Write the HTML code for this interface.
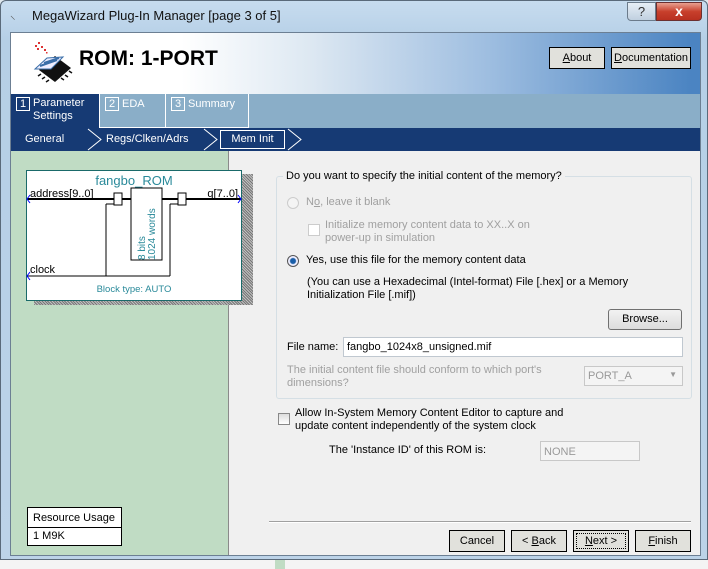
<!DOCTYPE html>
<html><head><meta charset="utf-8"><style>
*{box-sizing:border-box;margin:0;padding:0}
body{width:708px;height:569px;overflow:hidden;background:#dfe8ee;font-family:"Liberation Sans",sans-serif;font-size:11px;color:#000;position:relative}
.abs{position:absolute}
.frame{left:0;top:0;width:708px;height:560px;background:linear-gradient(#c7dcef,#b5cfe6 40px,#bcd3e8);border:1px solid #5a6a7a;border-radius:6px 6px 0 0}
.title{left:32px;top:8px;font-size:13px;font-family:"Liberation Sans",sans-serif;color:#111}
.client{left:10px;top:32px;width:691px;height:524px;background:#f0f0f0;border:1px solid #6c7f93;overflow:hidden}
.btn{position:absolute;background:#e1e1dc;border:1px solid #000;text-align:center;font-size:11px;line-height:20px}
.tnum{display:inline-block;border:1px solid #fff;width:14px;height:14px;line-height:12px;text-align:center;margin-right:3px;color:#fff}
.gray{color:#a0a0a0}
.nav{position:absolute;top:5px;color:#fff;font-size:11px}
</style></head><body>
<div class="abs frame"></div>
<div class="abs" style="left:0;top:560px;width:708px;height:9px;background:#f4f4f4"></div>
<div class="abs" style="left:275px;top:560px;width:10px;height:9px;background:#c0dcc4"></div>
<div class="abs" style="left:10px;top:8px;font-size:11px;color:#555">⸜</div>
<div class="abs title">MegaWizard Plug-In Manager [page 3 of 5]</div>
<div class="abs" style="left:627px;top:2px;width:29px;height:19px;border:1px solid #6b7b8b;border-radius:0 0 0 4px;background:linear-gradient(#e6eef6,#c0d0e0);text-align:center;font-size:13px;color:#333;line-height:17px">?</div>
<div class="abs" style="left:656px;top:2px;width:46px;height:19px;border:1px solid #6b3030;border-radius:0 0 4px 0;background:linear-gradient(#e8a090,#c8402c 50%,#b83020);text-align:center;font-size:14px;font-weight:bold;color:#fff;line-height:17px">x</div>

<div class="abs client">
 <div class="abs" style="left:0;top:0;width:691px;height:61px;background:linear-gradient(90deg,#fff 0,#fff 170px,#dde8f2 300px,#9dbde0 480px,#4b84c2 680px)"></div>
 <svg class="abs" style="left:14px;top:5px" width="50" height="45" viewBox="0 0 50 45">
  <g fill="#d33"><rect x="10" y="7" width="2" height="2"/><rect x="13" y="4" width="2" height="2"/><rect x="16" y="8" width="2" height="2"/><rect x="12" y="10" width="2" height="2"/><rect x="19" y="11" width="2" height="2"/><rect x="21" y="14" width="1.5" height="1.5"/></g>
  <polygon points="14,32 30,44 46,30 30,18" fill="#111"/>
  <g stroke="#111" stroke-width="1.5"><path d="M16,36 l-3,2 M20,39 l-3,2 M24,42 l-3,2 M44,33 l3,2 M40,37 l3,2 M36,40 l3,2"/></g>
  <polygon points="10,31 22,20 38,19 26,31" fill="#eef" stroke="#3a6ea8" stroke-width="1"/>
  <path d="M15,28 L32,22 M19,25 L34,20" stroke="#3a6ea8" stroke-width="2"/>
 </svg>
 <div class="abs" style="left:68px;top:14px;font-size:21px;font-weight:bold">ROM: 1-PORT</div>
 <div class="btn" style="left:538px;top:14px;width:56px;height:22px"><u>A</u>bout</div>
 <div class="btn" style="left:600px;top:14px;width:80px;height:22px"><u>D</u>ocumentation</div>
 <div class="abs" style="left:0;top:61px;width:691px;height:34px;background:#8aaec8"></div>
 <div class="abs" style="left:0;top:61px;width:88px;height:34px;background:#163a74;color:#fff;padding:3px 0 0 5px;line-height:13px"><span class="tnum" style="float:left">1</span>Parameter<br>Settings</div>
 <div class="abs" style="left:88px;top:61px;width:67px;height:34px;border:1px solid #fff;border-top:none;border-bottom:none;color:#fff;padding:3px 0 0 5px"><span class="tnum">2</span>EDA</div>
 <div class="abs" style="left:155px;top:61px;width:83px;height:34px;border-right:1px solid #fff;color:#fff;padding:3px 0 0 5px"><span class="tnum">3</span>Summary</div>
 <div class="abs" style="top:94px;height:1px;background:#fff;left:88px;width:150px"></div>
 <div class="abs" style="left:0;top:95px;width:691px;height:23px;background:#163a74">
  <span class="nav" style="left:14px">General</span>
  <svg class="abs" style="left:76px;top:0" width="16" height="23"><path d="M1,1 L14,11.5 L1,22" fill="none" stroke="#fff"/></svg>
  <span class="nav" style="left:95px">Regs/Clken/Adrs</span>
  <svg class="abs" style="left:192px;top:0" width="16" height="23"><path d="M1,1 L14,11.5 L1,22" fill="none" stroke="#fff"/></svg>
  <div class="abs" style="left:209px;top:2px;width:65px;height:19px;border:1px solid #fff;color:#fff;text-align:center;line-height:17px">Mem Init</div>
  <svg class="abs" style="left:276px;top:0" width="16" height="23"><path d="M1,1 L14,11.5 L1,22" fill="none" stroke="#fff"/></svg>
 </div>
 <div class="abs" style="left:0;top:118px;width:218px;height:406px;background:#c0dcc4;border-right:1px solid #8a8a8a"></div>
 <div class="abs" style="left:23px;top:141px;width:219px;height:131px;background:repeating-linear-gradient(45deg,#777 0 1px,#c0c0c0 1px 2px)"></div>
 <svg class="abs" style="left:15px;top:137px" width="219" height="132" viewBox="0 0 219 132">
  <rect x="0.5" y="0.5" width="215" height="130" fill="#fff" stroke="#1a6a6a"/>
  <text x="108" y="15" font-family="Liberation Sans" font-size="13" fill="#2a8a9a" text-anchor="middle">fangbo_ROM</text>
  <text x="4" y="27" font-family="Liberation Sans" font-size="11">address[9..0]</text>
  <text x="212" y="27" font-family="Liberation Sans" font-size="11" text-anchor="end">q[7..0]</text>
  <path d="M1,29 H88 M96,29 H105 M136,29 H152 M160,29 H215" stroke="#000" stroke-width="2"/>
  <rect x="88" y="23" width="8" height="12" fill="#fff" stroke="#000"/>
  <rect x="152" y="23" width="8" height="12" fill="#fff" stroke="#000"/>
  <rect x="105" y="18" width="31" height="72" fill="#fff" stroke="#000"/>
  <path d="M80,34 H88 M80,34 V106 M144,34 H152 M144,34 V106 M1,106 H144" stroke="#000" fill="none"/>
  <text transform="translate(119,90) rotate(-90)" font-family="Liberation Sans" font-size="10" fill="#2a8a9a">8 bits</text>
  <text transform="translate(129,90) rotate(-90)" font-family="Liberation Sans" font-size="10" fill="#2a8a9a">1024 words</text>
  <text x="4" y="103" font-family="Liberation Sans" font-size="11">clock</text>
  <text x="108" y="122" font-family="Liberation Sans" font-size="9.5" fill="#2a8a9a" text-anchor="middle">Block type: AUTO</text>
  <path d="M4,25 L1,29 L4,33 M212,25 L215,29 L212,33 M4,102 L1,106 L4,110" stroke="#00f" fill="none"/>
 </svg>
 <div class="abs" style="left:16px;top:474px;width:95px;height:39px;background:#fff;border:1px solid #000">
  <div style="height:20px;border-bottom:1px solid #000;padding:4px 0 0 5px">Resource Usage</div>
  <div style="padding:2px 0 0 5px">1 M9K</div>
 </div>
 <div class="abs" style="left:265px;top:143px;width:416px;height:223px;border:1px solid #d5dfe5;border-radius:3px"></div>
 <div class="abs" style="left:272px;top:137px;background:#f0f0f0;padding:0 3px">Do you want to specify the initial content of the memory?</div>
 <div class="abs" style="left:276px;top:164px;width:12px;height:12px;border-radius:50%;border:1px solid #ccc;background:#f4f4f4"></div>
 <div class="abs gray" style="left:295px;top:163px">N<u>o</u>, leave it blank</div>
 <div class="abs" style="left:297px;top:191px;width:12px;height:12px;border:1px solid #ccc;background:#fff"></div>
 <div class="abs gray" style="left:314px;top:186px;line-height:13px">Initialize memory content data to XX..X on<br>power-up in simulation</div>
 <div class="abs" style="left:276px;top:222px;width:12px;height:12px;border-radius:50%;border:1px solid #555;background:radial-gradient(#1a5ea8 0 2.5px,#eef 3.5px)"></div>
 <div class="abs" style="left:295px;top:221px">Yes, use this file for the memory content data</div>
 <div class="abs" style="left:296px;top:243px;line-height:13px">(You can use a Hexadecimal (Intel-format) File [.hex] or a Memory<br>Initialization File [.mif])</div>
 <div class="abs" style="left:597px;top:276px;width:74px;height:21px;border:1px solid #707070;border-radius:3px;background:linear-gradient(#f2f2f2,#dcdcdc);text-align:center;line-height:19px">Browse...</div>
 <div class="abs" style="left:276px;top:308px">File name:</div>
 <div class="abs" style="left:332px;top:304px;width:340px;height:20px;background:#fff;border:1px solid #c0c8d0;padding:3px 0 0 3px">fangbo_1024x8_unsigned.mif</div>
 <div class="abs gray" style="left:276px;top:331px;line-height:13px">The initial content file should conform to which port's<br>dimensions?</div>
 <div class="abs" style="left:573px;top:333px;width:99px;height:20px;border:1px solid #c8c8c8;background:#f4f4f4;color:#999;padding:3px 0 0 3px">PORT_A<span style="position:absolute;right:5px;top:3px;font-size:8px">▼</span></div>
 <div class="abs" style="left:267px;top:380px;width:12px;height:12px;border:1px solid #888;background:linear-gradient(#ddd,#fff)"></div>
 <div class="abs" style="left:284px;top:374px;line-height:13px">Allow In-System Memory Content Editor to capture and<br>update content independently of the system clock</div>
 <div class="abs" style="left:318px;top:411px">The 'Instance ID' of this ROM is:</div>
 <div class="abs" style="left:529px;top:408px;width:100px;height:20px;border:1px solid #c8c8c8;background:#f4f4f4;color:#999;padding:4px 0 0 3px">NONE</div>
 <div class="abs" style="left:258px;top:488px;width:422px;height:2px;background:#a0a0a0;border-bottom:1px solid #fff"></div>
 <div class="btn" style="left:438px;top:497px;width:56px;height:22px">Cancel</div>
 <div class="btn" style="left:500px;top:497px;width:56px;height:22px">&lt; <u>B</u>ack</div>
 <div class="btn" style="left:562px;top:497px;width:56px;height:22px;outline:1px dotted #000;outline-offset:-4px"><u>N</u>ext &gt;</div>
 <div class="btn" style="left:624px;top:497px;width:56px;height:22px"><u>F</u>inish</div>
</div>
</body></html>
